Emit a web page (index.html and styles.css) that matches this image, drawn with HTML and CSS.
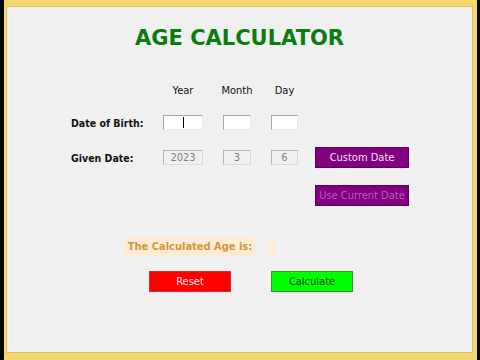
FILE: index.html
```html
<!DOCTYPE html>
<html>
<head>
<meta charset="utf-8">
<link rel="stylesheet" href="styles.css">
</head>
<body>
<div class="screen">
<div class="edge left"></div>
<div class="window">
  <h1 class="title">AGE CALCULATOR</h1>
  <div class="form">
    <div></div>
    <div class="head w40"><span>Year</span></div>
    <div class="head w28"><span>Month</span></div>
    <div class="head w27"><span>Day</span></div>
    <div></div>

    <div class="label">Date of Birth:</div>
    <div class="field w40 edit"><span class="caret"></span></div>
    <div class="field w28 edit"></div>
    <div class="field w27 edit"></div>
    <div></div>

    <div class="label">Given Date:</div>
    <div class="field w40 ro">2023</div>
    <div class="field w28 ro">3</div>
    <div class="field w27 ro">6</div>
    <button class="btn purple">Custom Date</button>

    <div></div>
    <div></div>
    <div></div>
    <div></div>
    <button class="btn purple disabled">Use Current Date</button>
  </div>
  <div class="age-row">
    <div class="age-label">The Calculated Age is:</div>
    <div class="age-value"></div>
  </div>
  <div class="btn-row">
    <button class="btn big red">Reset</button>
    <button class="btn big green">Calculate</button>
  </div>
</div>
<div class="edge right"></div>
</div>
</body>
</html>
```

FILE: styles.css
```css
html, body {
  margin: 0;
  padding: 0;
  background: #000;
}
.screen {
  width: 480px;
  height: 360px;
  overflow: hidden;
  display: flex;
  background: #000;
}
.edge {
  flex: none;
  height: 360px;
  background: #050505;
}
.edge.left { width: 4px; }
.edge.right { width: 3px; }
.window {
  box-sizing: border-box;
  flex: 1;
  height: 360px;
  background: #f0f0f0;
  border-style: solid;
  border-color: #f3d872;
  border-width: 6px 4px 7px 2px;
  box-shadow: inset 1px 1px 0 #dcc35e, inset -1px -1px 0 #dcc35e;
  font-family: "DejaVu Sans Condensed", "DejaVu Sans", sans-serif;
  font-size: 11px;
  color: #000;
}
.title {
  margin: 0;
  padding-top: 20px;
  font-family: "DejaVu Sans", sans-serif;
  font-weight: bold;
  font-size: 21px;
  line-height: 24px;
  text-align: center;
  color: #0b7d10;
}
.form {
  display: grid;
  grid-template-columns: 92px 60px 48px 44px 94px;
  grid-template-rows: 14px 15px 21px 21px;
  row-gap: 17px;
  align-items: center;
  margin-top: 34px;
  padding-left: 65px;
}
.head {
  display: flex;
  justify-content: center;
  line-height: 14px;
  color: #111;
  white-space: nowrap;
}
.w40 { width: 40px; }
.w28 { width: 28px; }
.w27 { width: 27px; }
.label {
  font-weight: bold;
  font-size: 10.5px;
  white-space: nowrap;
  color: #111;
}
.field {
  box-sizing: border-box;
  height: 15px;
  display: flex;
  align-items: center;
  justify-content: center;
  font-size: 11px;
  line-height: 13px;
}
.edit {
  background: #fff;
  border-top: 1px solid #a8a8a8;
  border-left: 1px solid #a8a8a8;
  border-right: 1px solid #e8e8e8;
  border-bottom: 1px solid #e8e8e8;
}
.ro {
  background: #f0f0f0;
  border: 1px solid #b4b4b4;
  border-right-color: #dadada;
  border-bottom-color: #dadada;
  color: #808080;
}
.caret {
  display: block;
  width: 1px;
  height: 11px;
  background: #000;
}
.btn {
  box-sizing: border-box;
  margin: 0;
  padding: 0;
  width: 94px;
  height: 21px;
  font-family: "DejaVu Sans Condensed", "DejaVu Sans", sans-serif;
  font-size: 11px;
  line-height: 19px;
  text-align: center;
  white-space: nowrap;
  overflow: hidden;
}
.purple {
  background: #800080;
  border: 1px solid #5c005c;
  color: #f6e2f6;
}
.purple.disabled {
  color: #c158c1;
}
.age-row {
  display: flex;
  align-items: stretch;
  gap: 15px;
  margin-top: 31px;
  padding-left: 119px;
  height: 19px;
}
.age-label {
  width: 130px;
  background: #fcecd6;
  color: #d3963e;
  font-weight: bold;
  line-height: 19px;
  text-align: center;
  white-space: nowrap;
}
.age-value {
  width: 5px;
  background: #fcecd6;
}
.btn-row {
  display: flex;
  gap: 40px;
  margin-top: 15px;
  padding-left: 143px;
}
.big {
  width: 82px;
}
.red {
  background: #ff0000;
  border: 1px solid #c43232;
  color: #ffeaea;
}
.green {
  background: #00ff00;
  border: 1px solid #1fa31f;
  color: #0a3a0a;
}
```
